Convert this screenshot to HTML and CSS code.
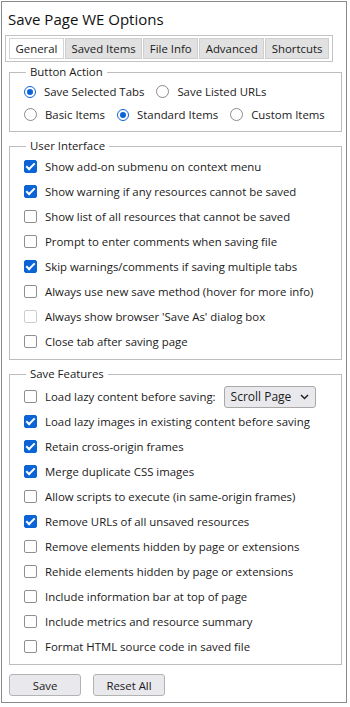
FILE: index.html
```html
<!DOCTYPE html>
<html lang="en">
<head>
    <meta charset="UTF-8">
    <title>Save Page WE Options</title>
    <link rel="stylesheet" href="styles.css">
</head>
<body>
    <div class="page">
        <div class="title">Save Page WE Options</div>

        <div class="tabs">
            <div class="tab active">General</div>
            <div class="tab">Saved Items</div>
            <div class="tab">File Info</div>
            <div class="tab">Advanced</div>
            <div class="tab">Shortcuts</div>
        </div>

        <fieldset class="group action">
            <legend>Button Action</legend>
            <div class="radio-row">
                <label class="opt"><span class="radio on"></span>Save Selected Tabs</label>
                <label class="opt"><span class="radio"></span>Save Listed URLs</label>
            </div>
            <div class="radio-row">
                <label class="opt"><span class="radio"></span>Basic Items</label>
                <label class="opt"><span class="radio on"></span>Standard Items</label>
                <label class="opt"><span class="radio"></span>Custom Items</label>
            </div>
        </fieldset>

        <fieldset class="group">
            <legend>User Interface</legend>
            <label class="row"><span class="box on"></span>Show add-on submenu on context menu</label>
            <label class="row"><span class="box on"></span>Show warning if any resources cannot be saved</label>
            <label class="row"><span class="box"></span>Show list of all resources that cannot be saved</label>
            <label class="row"><span class="box"></span>Prompt to enter comments when saving file</label>
            <label class="row"><span class="box on"></span>Skip warnings/comments if saving multiple tabs</label>
            <label class="row"><span class="box"></span>Always use new save method (hover for more info)</label>
            <label class="row"><span class="box off"></span>Always show browser 'Save As' dialog box</label>
            <label class="row"><span class="box"></span>Close tab after saving page</label>
        </fieldset>

        <fieldset class="group">
            <legend>Save Features</legend>
            <label class="row lazy"><span class="box"></span>Load lazy content before saving:
                <span class="select">Scroll Page
                    <svg width="9" height="6" viewBox="0 0 9 6"><path d="M1 1 L4.5 4.5 L8 1" fill="none" stroke="#222" stroke-width="1.5"/></svg>
                </span>
            </label>
            <label class="row"><span class="box on"></span>Load lazy images in existing content before saving</label>
            <label class="row"><span class="box on"></span>Retain cross-origin frames</label>
            <label class="row"><span class="box on"></span>Merge duplicate CSS images</label>
            <label class="row"><span class="box"></span>Allow scripts to execute (in same-origin frames)</label>
            <label class="row"><span class="box on"></span>Remove URLs of all unsaved resources</label>
            <label class="row"><span class="box"></span>Remove elements hidden by page or extensions</label>
            <label class="row"><span class="box"></span>Rehide elements hidden by page or extensions</label>
            <label class="row"><span class="box"></span>Include information bar at top of page</label>
            <label class="row"><span class="box"></span>Include metrics and resource summary</label>
            <label class="row"><span class="box"></span>Format HTML source code in saved file</label>
        </fieldset>

        <div class="buttons">
            <button class="btn">Save</button>
            <button class="btn">Reset All</button>
        </div>
    </div>
</body>
</html>
```

FILE: styles.css
```css
body {
    margin: 0;
    padding: 0;
    background-color: #fff;
    color: #1a1a1a;
    font-family: "Open Sans", "Noto Sans", sans-serif;
    font-size: 11.4px;
}
.page {
    width: 344px;
    height: 700px;
    margin: 1px 0 0 1px;
    border: 1px solid #8a8a8a;
}
.title {
    font-size: 15px;
    padding: 7px 0 0 6px;
    height: 26px;
    color: #111;
}
.tabs {
    display: flex;
    margin: 0 0 0 3px;
    width: 320px;
    padding: 2px 3px;
    border: 1px solid #c3c3c3;
    gap: 1px;
}
.tab {
    height: 19px;
    line-height: 19px;
    padding: 0 4px;
    background-color: #e1e1e1;
    border: 1px solid #cfcfcf;
    flex-grow: 1;
    text-align: center;
    white-space: nowrap;
}
.tab.active {
    background-color: #fff;
    border-color: #d4d4d4;
}
.group {
    margin: 4px 0 0 7px;
    width: 333px;
    border: 1px solid #bdbdbd;
    padding: 2px 0 5px 14px;
    box-sizing: border-box;
}
.group + .group {
    margin-top: 8px;
}
.action {
    padding-top: 2px;
}
legend {
    padding: 0 4px;
    margin-left: 2px;
    line-height: 12px;
}
.radio-row {
    display: flex;
    gap: 12px;
    height: 23px;
    align-items: center;
}
.opt {
    display: flex;
    align-items: center;
}
.radio {
    width: 11px;
    height: 11px;
    border: 1px solid #8a8a8a;
    border-radius: 50%;
    margin-right: 8px;
    display: inline-block;
    position: relative;
}
.radio.on {
    border: 1.5px solid #0a64d6;
    width: 10px;
    height: 10px;
}
.radio.on::after {
    content: "";
    position: absolute;
    left: 2px;
    top: 2px;
    width: 6px;
    height: 6px;
    border-radius: 50%;
    background-color: #0a64d6;
}
.row {
    display: flex;
    align-items: center;
    height: 25px;
    white-space: nowrap;
}
.row.lazy {
    margin-top: 2px;
}
.box {
    width: 11px;
    height: 11px;
    border: 1.5px solid #8f8f8f;
    border-radius: 2px;
    margin: 0 8px 0 0;
    flex-shrink: 0;
    position: relative;
}
.box.on {
    background-color: #0a64d6;
    border-color: #0a64d6;
}
.box.on::after {
    content: "";
    position: absolute;
    left: 3px;
    top: 0px;
    width: 3px;
    height: 7px;
    border: solid #fff;
    border-width: 0 2px 2px 0;
    transform: rotate(45deg);
}
.box.off {
    border-color: #cdcdcd;
}
.select {
    display: inline-flex;
    align-items: center;
    justify-content: space-between;
    margin-left: 8px;
    width: 78px;
    height: 20px;
    padding: 0 6px;
    background-color: #e9e9ed;
    border: 1px solid #a8a8a8;
    border-radius: 3px;
    font-size: 12px;
}
.buttons {
    display: flex;
    gap: 12px;
    margin: 9px 0 0 7px;
}
.btn {
    width: 72px;
    height: 22px;
    font-family: inherit;
    font-size: 11.4px;
    color: #1a1a1a;
    background-color: #e9e9ed;
    border: 1px solid #b3b3b3;
    border-radius: 3px;
}
```
